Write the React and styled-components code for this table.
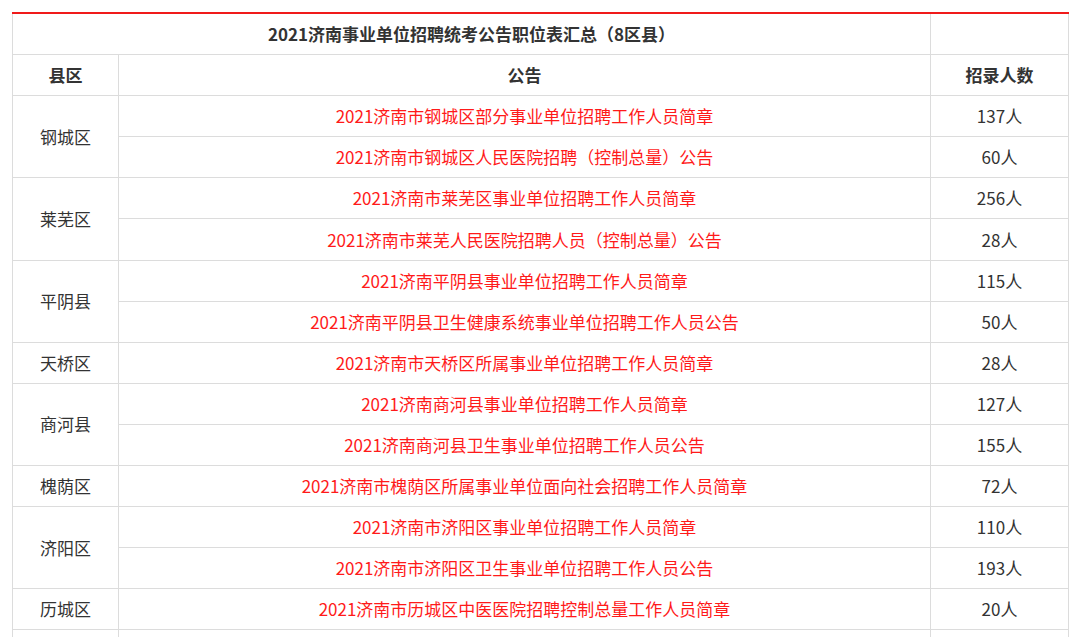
import React from "react";
import styled, { createGlobalStyle } from "styled-components";

const GlobalStyle = createGlobalStyle`
  body {
    margin: 0;
    background: #fff;
    font-family: "Noto Sans CJK SC", "Noto Sans", sans-serif;
  }
`;

const Page = styled.div`
  padding: 12px 12px 0;
  height: 637px;
  overflow: hidden;
  box-sizing: border-box;
`;

const Table = styled.table`
  width: 1056px;
  border-collapse: collapse;
  table-layout: fixed;
  border-top: 2px solid #f01a1a;
  font-size: 17px;
  color: #333;

  td {
    border: 1px solid #dcdcdc;
    height: 40.1px;
    padding: 0;
    text-align: center;
    vertical-align: middle;
    line-height: 20px;
  }
`;

const Head = styled.td`
  font-weight: bold;
  color: #333;
`;

const Notice = styled.td`
  color: #ff1a1a;
`;

const data = [
  {
    area: "钢城区",
    rows: [
      ["2021济南市钢城区部分事业单位招聘工作人员简章", "137人"],
      ["2021济南市钢城区人民医院招聘（控制总量）公告", "60人"],
    ],
  },
  {
    area: "莱芜区",
    rows: [
      ["2021济南市莱芜区事业单位招聘工作人员简章", "256人"],
      ["2021济南市莱芜人民医院招聘人员（控制总量）公告", "28人"],
    ],
  },
  {
    area: "平阴县",
    rows: [
      ["2021济南平阴县事业单位招聘工作人员简章", "115人"],
      ["2021济南平阴县卫生健康系统事业单位招聘工作人员公告", "50人"],
    ],
  },
  {
    area: "天桥区",
    rows: [["2021济南市天桥区所属事业单位招聘工作人员简章", "28人"]],
  },
  {
    area: "商河县",
    rows: [
      ["2021济南商河县事业单位招聘工作人员简章", "127人"],
      ["2021济南商河县卫生事业单位招聘工作人员公告", "155人"],
    ],
  },
  {
    area: "槐荫区",
    rows: [["2021济南市槐荫区所属事业单位面向社会招聘工作人员简章", "72人"]],
  },
  {
    area: "济阳区",
    rows: [
      ["2021济南市济阳区事业单位招聘工作人员简章", "110人"],
      ["2021济南市济阳区卫生事业单位招聘工作人员公告", "193人"],
    ],
  },
  {
    area: "历城区",
    rows: [["2021济南市历城区中医医院招聘控制总量工作人员简章", "20人"]],
  },
];

const App = () => (
  <Page>
    <GlobalStyle />
    <Table>
      <colgroup>
        <col style={{ width: 106 }} />
        <col style={{ width: 812 }} />
        <col style={{ width: 138 }} />
      </colgroup>
      <tbody>
        <tr>
          <Head colSpan={2}>2021济南事业单位招聘统考公告职位表汇总（8区县）</Head>
          <td />
        </tr>
        <tr>
          <Head>县区</Head>
          <Head>公告</Head>
          <Head>招录人数</Head>
        </tr>
        {data.map((group) =>
          group.rows.map(([title, count], i) => (
            <tr key={title}>
              {i === 0 && <td rowSpan={group.rows.length}>{group.area}</td>}
              <Notice>{title}</Notice>
              <td>{count}</td>
            </tr>
          ))
        )}
        <tr>
          <td />
          <td />
          <td />
        </tr>
      </tbody>
    </Table>
  </Page>
);

export default App;
